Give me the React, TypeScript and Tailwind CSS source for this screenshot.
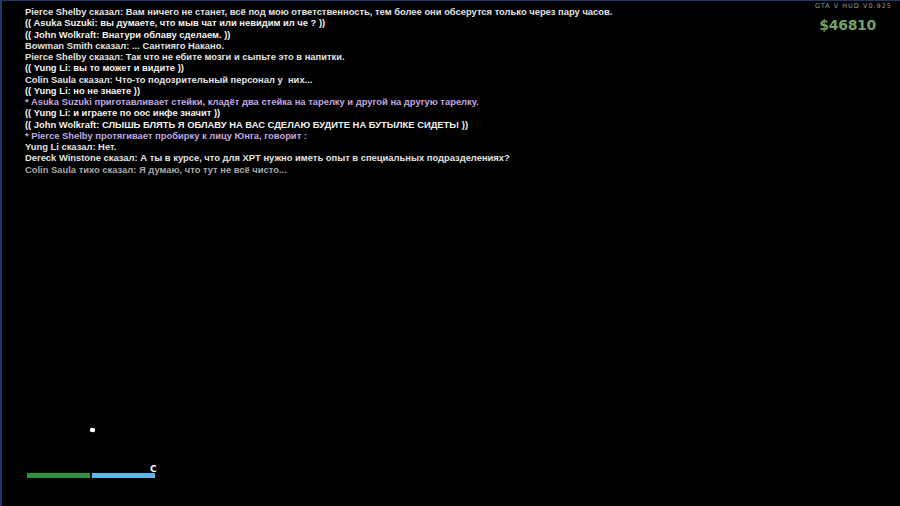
import React from "react";

type ChatLine = { text: string; kind: "say" | "ooc" | "me" | "low" };

const lines: ChatLine[] = [
  { text: "Pierce Shelby сказал: Вам ничего не станет, всё под мою ответственность, тем более они обсерутся только через пару часов.", kind: "say" },
  { text: "(( Asuka Suzuki: вы думаете, что мыв чат или невидим ил че ? ))", kind: "ooc" },
  { text: "(( John Wolkraft: Внатури облаву сделаем. ))", kind: "ooc" },
  { text: "Bowman Smith сказал: ... Сантияго Накано.", kind: "say" },
  { text: "Pierce Shelby сказал: Так что не ебите мозги и сыпьте это в напитки.", kind: "say" },
  { text: "(( Yung Li: вы то может и видите ))", kind: "ooc" },
  { text: "Colin Saula сказал: Что-то подозрительный персонал у  них...", kind: "say" },
  { text: "(( Yung Li: но не знаете ))", kind: "ooc" },
  { text: "* Asuka Suzuki приготавливает стейки, кладёт два стейка на тарелку и другой на другую тарелку.", kind: "me" },
  { text: "(( Yung Li: и играете по оос инфе значит ))", kind: "ooc" },
  { text: "(( John Wolkraft: СЛЫШЬ БЛЯТЬ Я ОБЛАВУ НА ВАС СДЕЛАЮ БУДИТЕ НА БУТЫЛКЕ СИДЕТЬ! ))", kind: "ooc" },
  { text: "* Pierce Shelby протягивает пробирку к лицу Юнга, говорит :", kind: "me" },
  { text: "Yung Li сказал: Нет.", kind: "say" },
  { text: "Dereck Winstone сказал: А ты в курсе, что для XPT нужно иметь опыт в специальных подразделениях?", kind: "say" },
  { text: "Colin Saula тихо сказал: Я думаю, что тут не всё чисто...", kind: "low" },
];

const colorFor = (kind: ChatLine["kind"]) => {
  if (kind === "me") return "text-[#c3a6e0]";
  if (kind === "low") return "text-[#a8a8a8]";
  if (kind === "ooc") return "text-[#f2f2f2]";
  return "text-[#e2e2e2]";
};

const App = () => {
  return (
    <div className="w-[900px] h-[506px] bg-black border-l-2 border-t border-[#1b3a6e] flex flex-col font-['Liberation_Sans',Arial,sans-serif] overflow-hidden">
      <div className="flex justify-between">
        {/* chat */}
        <div className="pl-[23px] pt-[5px] flex flex-col">
          {lines.map((l, i) => (
            <div
              key={i}
              className={`text-[9.4px] leading-[11.25px] font-bold whitespace-pre [text-shadow:0_0_1px_#000] ${colorFor(l.kind)}`}
            >
              {l.text}
            </div>
          ))}
        </div>

        {/* hud top right */}
        <div className="flex flex-col items-end pr-[8px] pt-[1px]">
          <div className="text-[6.5px] tracking-[1px] text-[#9a9a9a] font-['DejaVu_Sans',sans-serif]">
            GTA V HUD V0.925
          </div>
          <div className="mt-[6px] pr-[16px] text-[14px] leading-[15px] font-black tracking-[-0.3px] text-[#6fa066] font-['DejaVu_Sans',sans-serif]">
            $46810
          </div>
        </div>
      </div>

      <div className="flex-1" />

      {/* bottom left radar area */}
      <div className="pl-[25px] pb-[28px] flex flex-col">
        <div className="pl-[63px] mb-[33px]">
          <div className="w-[5px] h-[4px] bg-white rounded-[1px] rotate-12" />
        </div>
        <div className="flex items-end">
          <div className="w-[63px] h-[5px] bg-[#2f9040]" />
          <div className="w-[2px]" />
          <div className="w-[63px] h-[5px] bg-[#5db6e8]" />
          <div className="-ml-[5px] mb-[4px] text-[9px] leading-[9px] font-bold text-white font-['DejaVu_Sans',sans-serif]">
            C
          </div>
        </div>
      </div>
    </div>
  );
};

export default App;
